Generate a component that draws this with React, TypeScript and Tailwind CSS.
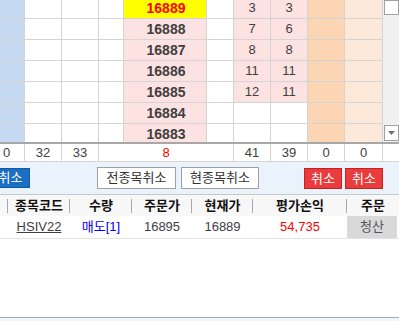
import React from "react";

type Row = { price: number; a?: number; b?: number; hl?: boolean };

const rows: Row[] = [
  { price: 16889, a: 3, b: 3, hl: true },
  { price: 16888, a: 7, b: 6 },
  { price: 16887, a: 8, b: 8 },
  { price: 16886, a: 11, b: 11 },
  { price: 16885, a: 12, b: 11 },
  { price: 16884 },
  { price: 16883 },
];

const font = { fontFamily: '"Liberation Sans", "Noto Sans CJK KR", sans-serif' };

function GridRow({ r }: { r: Row }) {
  const pink = r.a !== undefined ? "bg-[#fde2e2]" : "bg-white";
  return (
    <div className="flex h-[21px] border-b border-[#d4d4d4]">
      <div className="w-[25px] shrink-0 border-r border-[#d4d4d4] bg-[#c5d9f1]" />
      <div className="w-[37px] shrink-0 border-r border-[#d4d4d4] bg-white" />
      <div className="w-[37px] shrink-0 border-r border-[#d4d4d4] bg-white" />
      <div className="w-[25px] shrink-0 border-r border-[#d4d4d4] bg-white" />
      <div
        className={`w-[83px] shrink-0 border-r border-[#d4d4d4] flex items-center justify-center pl-[2px] text-[14px] font-bold ${
          r.hl ? "bg-[#ffff00] text-[#ff0000]" : "bg-[#fde2e2] text-[#404040]"
        }`}
      >
        {r.price}
      </div>
      <div className="w-[27px] shrink-0 border-r border-[#d4d4d4] bg-white" />
      <div className={`w-[37px] shrink-0 border-r border-[#d4d4d4] ${pink} flex items-center justify-center text-[13px] text-[#404040]`}>
        {r.a}
      </div>
      <div className={`w-[37px] shrink-0 border-r border-[#d4d4d4] ${pink} flex items-center justify-center text-[13px] text-[#404040]`}>
        {r.b}
      </div>
      <div className="w-[37px] shrink-0 border-r border-[#d4d4d4] bg-[#fcd5b4]" />
      <div className="w-[38px] shrink-0 border-r border-[#d4d4d4] bg-[#fde9d9]" />
    </div>
  );
}

function Sum({ w, v, red }: { w: string; v: string; red?: boolean }) {
  return (
    <div className={`${w} shrink-0 border-r border-[#d4d4d4] flex items-center justify-center text-[13px] ${red ? "text-[#ff0000]" : "text-[#404040]"}`}>
      {v}
    </div>
  );
}

export default function App() {
  return (
    <div className="w-[399px] h-[321px] overflow-hidden bg-white relative" style={font}>
      {/* price grid */}
      <div className="flex h-[142px] overflow-hidden">
        <div className="w-[383px] mt-[-2px]">
          {rows.map((r) => (
            <GridRow key={r.price} r={r} />
          ))}
        </div>
        <div className="w-[16px] bg-[#f0f0f0] flex flex-col justify-between pb-[1px]">
          <div className="h-[15px] w-[15px] bg-white border border-[#a0a0a0] ml-[1px]" />
          <div className="h-[16px] w-[15px] bg-white border border-[#a0a0a0] ml-[1px] flex items-center justify-center">
            <svg width="7" height="4" viewBox="0 0 7 4">
              <path d="M0 0 L7 0 L3.5 4 Z" fill="#707070" />
            </svg>
          </div>
        </div>
      </div>

      {/* summary row */}
      <div className="flex h-[20px] border-t-2 border-[#a8a8a8] border-b border-b-[#d4d4d4]">
        <div className="w-[25px] shrink-0 border-r border-[#d4d4d4] flex items-center pl-[3px] text-[13px] text-[#404040]">0</div>
        <Sum w="w-[37px]" v="32" />
        <Sum w="w-[37px]" v="33" />
        <Sum w="w-[135px]" v="8" red />
        <Sum w="w-[37px]" v="41" />
        <Sum w="w-[37px]" v="39" />
        <Sum w="w-[37px]" v="0" />
        <Sum w="w-[38px]" v="0" />
      </div>

      {/* button bar */}
      <div className="h-[32px] bg-[#eaf3fc] flex items-center pt-[2px] relative">
        <div className="absolute left-[-9px] top-[6px] h-[20px] w-[39px] bg-[#1a6ec4] border border-[#1459a3] text-white text-[13px] flex items-center justify-center">
          취소
        </div>
        <div className="absolute left-[97px] top-[5px] h-[22px] w-[79px] bg-white border border-[#a0a0a0] text-[#333] text-[13px] flex items-center justify-center">
          전종목취소
        </div>
        <div className="absolute left-[181px] top-[5px] h-[22px] w-[78px] bg-white border border-[#a0a0a0] text-[#333] text-[13px] flex items-center justify-center">
          현종목취소
        </div>
        <div className="absolute left-[304px] top-[6px] h-[21px] w-[38px] bg-[#ea3c3c] border border-[#c32222] text-white text-[13px] flex items-center justify-center">
          취소
        </div>
        <div className="absolute left-[345px] top-[6px] h-[21px] w-[38px] bg-[#ea3c3c] border border-[#c32222] text-white text-[13px] flex items-center justify-center">
          취소
        </div>
      </div>

      {/* order table header */}
      <div className="flex h-[22px] border-t border-[#c8c8c8] bg-[#f7f7f7] text-[13px] font-bold text-[#111]">
        {[
          ["w-[8px]", ""],
          ["w-[62px]", "종목코드"],
          ["w-[62px]", "수량"],
          ["w-[60px]", "주문가"],
          ["w-[61px]", "현재가"],
          ["w-[94px]", "평가손익"],
          ["w-[52px]", "주문"],
        ].map(([w, t], i) => (
          <div key={i} className={`${w} shrink-0 flex items-center justify-center relative`}>
            {t}
            {i < 6 && <span className="absolute right-0 top-[4px] h-[14px] w-px bg-[#a8a8a8]" />}
          </div>
        ))}
      </div>

      {/* order row */}
      <div className="flex h-[23px] border-b border-[#e4e4e4] text-[13px] text-[#404040]">
        <div className="w-[8px] shrink-0" />
        <div className="w-[62px] shrink-0 flex items-center justify-center underline">HSIV22</div>
        <div className="w-[62px] shrink-0 flex items-center justify-center text-[#0000ff]">매도[1]</div>
        <div className="w-[60px] shrink-0 flex items-center justify-center">16895</div>
        <div className="w-[61px] shrink-0 flex items-center justify-center">16889</div>
        <div className="w-[94px] shrink-0 flex items-center justify-center text-[#ff0000]">54,735</div>
        <div className="w-[50px] shrink-0 flex items-center justify-center bg-[#d9d9d9] text-[#555]">청산</div>
      </div>

      {/* bottom line */}
      <div className="absolute left-0 right-0 top-[317px] h-[4px] border-t border-[#a8a8a8] bg-[#eef5fc]" />
    </div>
  );
}
